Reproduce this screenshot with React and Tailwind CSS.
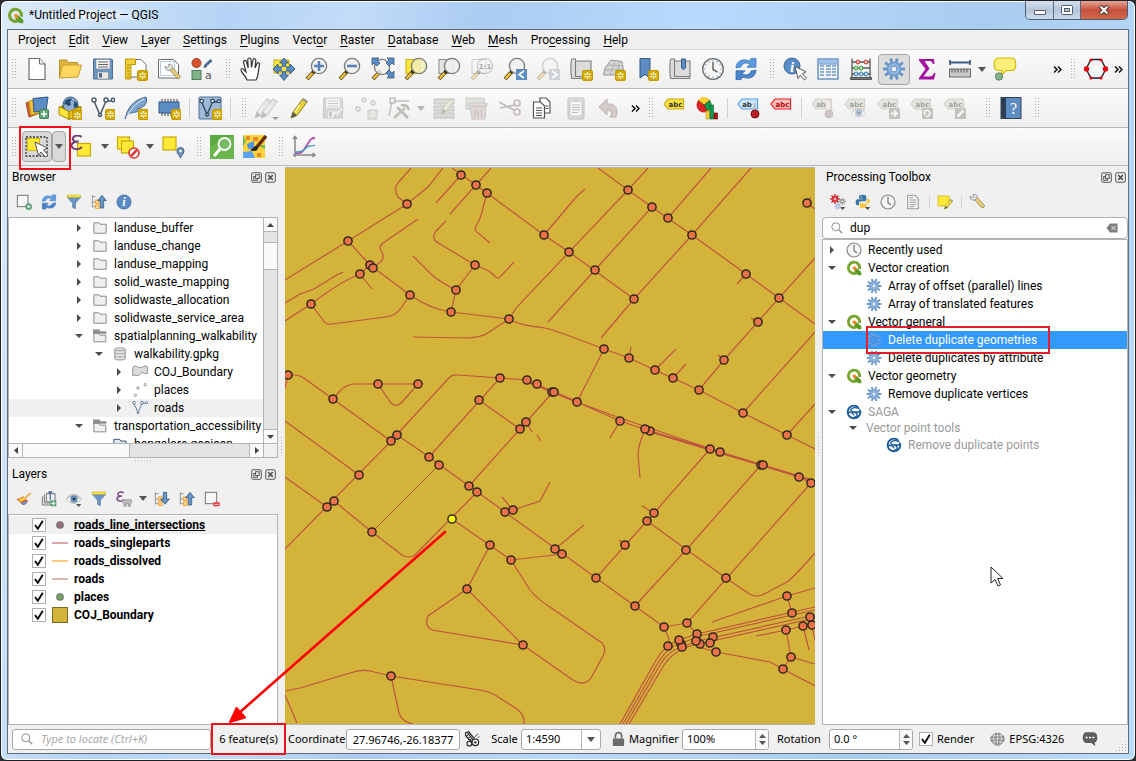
import React from "react";

/* ---------- icon drawings, all on a 24 x 24 grid ---------- */

const Badge = ({ x = 13, y = 13, dim }) => (
  <g transform={`translate(${x} ${y})`}>
    <rect x="0.5" y="0.5" width="10" height="10" rx="1.5" fill={dim ? "#bdbdb5" : "#d4aa00"} stroke={dim ? "#c9c9c2" : "#c29a00"} />
    <path d="M5.5 2v7M2.5 3.7l6 3.6M8.5 3.7l-6 3.6" stroke="#fff" strokeWidth="1.3" />
    <circle cx="5.5" cy="5.5" r="1.2" fill={dim ? "#bdbdb5" : "#d4aa00"} />
  </g>
);

const Lens = ({ cx = 14, cy = 9, fill = "#f1f1ef", dim, children }) => (
  <g opacity={dim ? 0.35 : 1}>
    <path d="M9.5 14L2 22" stroke="#5a4a1a" strokeWidth="4" strokeLinecap="butt" />
    <path d="M7.5 16.2L2.5 21.5" stroke="#f5c33b" strokeWidth="2.4" />
    <path d="M9.7 13.6L8 15.4" stroke="#222" strokeWidth="3.4" />
    <circle cx={cx} cy={cy} r="7.6" fill={fill} fillOpacity="0.85" stroke="#7d7d7b" strokeWidth="1.4" />
    {children}
  </g>
);

const Tag = ({ fill, stroke, color = "#333", text = "abc" }) => (
  <g>
    <path d="M2 8l4-5h15.500v10H6z" fill={fill} stroke={stroke} strokeWidth="1.2" />
    <text x={text === "ab" ? 11 : 13.5} y="10.500" fontSize="7" fontWeight="700" textAnchor="middle" fill={color} fontFamily="DejaVu Sans, sans-serif">{text}</text>
  </g>
);

const gearTeeth = (n, cx, cy, r1, r2, color, w) =>
  Array.from({ length: n }, (_, i) => {
    const a = (i * 2 * Math.PI) / n;
    return (
      <line key={i} x1={cx + r1 * Math.cos(a)} y1={cy + r1 * Math.sin(a)} x2={cx + r2 * Math.cos(a)} y2={cy + r2 * Math.sin(a)} stroke={color} strokeWidth={w} />
    );
  });

const Gear = ({ cx = 12, cy = 12, r = 11, color = "#6996c9", fill = "#8fb4e0", hole = "#ecf2fa", n = 10 }) => (
  <g>
    {gearTeeth(n, cx, cy, r * 0.5, r, color, r * 0.26)}
    <circle cx={cx} cy={cy} r={r * 0.6} fill={fill} stroke={color} strokeWidth={r * 0.12} />
    <circle cx={cx} cy={cy} r={r * 0.26} fill={hole} stroke={color} strokeWidth={r * 0.09} />
  </g>
);

const refresh = (
  <g>
    <path d="M2 11C2 4 9 1 15 4l2-2.600h5v8.800h-9l3-3C11.500 4.800 8 6.500 7 10z" fill="#5e9be0" stroke="#3f77b8" strokeWidth="0.8" />
    <path d="M22 13c0 7-7 10-13 7l-2 2.600h-5v-8.800h9l-3 3c4.500 2.400 8 .7 9-2.700z" fill="#4a85cc" stroke="#3267a8" strokeWidth="0.8" />
  </g>
);

const clock = (
  <g>
    <circle cx="12" cy="12" r="10.300" fill="#f6f6f5" stroke="#6b6b6b" strokeWidth="1.300" />
    {gearTeeth(12, 12, 12, 7.6, 8.8, "#6996c9", 1.2)}
    <path d="M12 5v7.500l4.500 2.500" fill="none" stroke="#666" strokeWidth="1.500" />
  </g>
);

const greyClock = (
  <g>
    <circle cx="12" cy="12" r="10.500" fill="#f4f4f4" stroke="#888" strokeWidth="1.800" />
    <path d="M12 4v9l4.500 3.500" fill="none" stroke="#777" strokeWidth="1.800" />
  </g>
);

const page = (
  <g>
    <path d="M4 1.500h10.500l5.500 5.500v15.500H4z" fill="#fff" stroke="#6d6d6d" strokeWidth="1.200" />
    <path d="M14.500 1.500v5.500h5.500" fill="#eee" stroke="#6d6d6d" strokeWidth="1" />
  </g>
);

const arrowHead = (
  <path d="M12 9.500l3 12 2.300-3.300 4.200 4.800 2-1.800-4.200-4.600 3.700-1.800z" fill="#fff" stroke="#555" strokeWidth="1" />
);

const floppy = (
  <g>
    <path d="M2.500 2h18l1 1v19h-19z" fill="#6d96c4" stroke="#4e6f94" />
    <rect x="5" y="2.500" width="14" height="9.500" fill="#f6f6f4" stroke="#75849a" strokeWidth="0.600" />
    <path d="M7 5h10M7 7.500h10M7 10h10" stroke="#666" />
    <rect x="6.500" y="15" width="11" height="7" fill="#ece8dc" stroke="#75849a" strokeWidth="0.600" />
    <rect x="8" y="16" width="3" height="4.500" fill="#4e6f94" />
  </g>
);

const pencil = (
  <g>
    <path d="M3 22l2-6L15 2.500l4.500 3L9 19.500z" fill="#e8d13c" stroke="#8f8022" />
    <path d="M3 22l2-6 4 3.500z" fill="#59584c" />
    <path d="M14 4l4.500 3 1-1.500L15 2.500z" fill="#999" />
    <path d="M11.500 9L7 16" stroke="#fff6a0" strokeWidth="1.500" />
  </g>
);

const wrench = (
  <g>
    <path d="M8 8.500l4-3.500 11 12c1 1.500-1.500 5-4 3.500z" fill="#e6cf7b" stroke="#7b6a3e" />
    <path d="M1.500 3.500l4 1.500 2-2L6 .8c4-1.500 7 1 6 5.200L8.500 9C4 10 1 7.500 1.500 3.500z" fill="#e3e3e0" stroke="#777" />
  </g>
);

const funnel = (
  <g>
    <path d="M2 5h20l-8 9v8l-4-2v-6z" fill="#6996c9" stroke="#49709c" />
    <rect x="2" y="1.500" width="20" height="3.500" fill="#fbe63c" stroke="#b9a726" strokeWidth="0.800" />
  </g>
);

const qgis = (
  <g>
    <path d="M17.500 18.200A8.500 8.500 0 1 1 20.300 13.500" fill="none" stroke="#78a52d" strokeWidth="4.400" />
    <path d="M12 12l4.500.2L23 18.500v4.300h-4.500L12 16.500z" fill="#5c9a26" />
    <path d="M9.500 9.500h4l2.500 2.500-1 3-3 1-2.500-2.500z" fill="#f9c89a" />
    <path d="M11 10.500h3l2 2-1.500 2.500h-2L11 13.500z" fill="#ee7913" />
  </g>
);

const saga = (
  <g>
    <circle cx="12" cy="12" r="9.500" fill="#fff" stroke="#1a5c9c" strokeWidth="2.800" />
    <path d="M18.500 6.500C13 4 7 6 7 9.500c0 2.500 10 2.500 10 6.500 0 2.500-4 3.500-6 4.500M2 13c4-1.500 9 0 10 4M9 12h13" fill="none" stroke="#1a5c9c" strokeWidth="2" />
    <path d="M18 1l6 1v7l-3.500-.5z" fill="#fff" />
  </g>
);

const treeArrow = (down) => (
  <g>
    <path d="M2 2v18M2 4h5M2 12h4M2 19h4" fill="none" stroke="#888" strokeWidth="1.300" />
    <rect x="7" y="9" width="5" height="5" fill="#ffe6b0" stroke="#f59a23" strokeWidth="1.500" />
    <rect x="7" y="16.500" width="5" height="5" fill="#ffe6b0" stroke="#f59a23" strokeWidth="1.500" />
    <path d={down ? "M14 2h5v10h4l-6.500 8L10 12h4z" : "M14 21h5V10h4l-6.500-8L10 10h4z"} fill="#6996c9" stroke="#34597f" strokeWidth="1.200" />
  </g>
);

const epsilon = (
  <path d="M11.500 3C8 0 2 2 3 5.500 3.500 7.500 6 8 8.500 7.500 4 7.500 1 9.500 1.500 12c.8 4 7.500 4 10.500 1" fill="none" stroke="#6b3c78" strokeWidth="2" />
);

const vectorV = (c) => (
  <g fill="none" stroke={c} strokeWidth="1.500">
    <path d="M3 5l6 14 6-14h6" />
    <circle cx="3" cy="4" r="2" fill="#fff" />
    <circle cx="15" cy="4" r="2" fill="#fff" />
    <circle cx="22" cy="4" r="1.700" fill="#fff" />
    <circle cx="9" cy="19" r="1.500" fill="#fff" />
  </g>
);

const eye = (
  <g>
    <path d="M1 13C6 5.500 16 5 22 13 16 20 7 20 1 13z" fill="#fff" stroke="#9a9a9a" strokeWidth="1.200" />
    <circle cx="12" cy="12" r="5" fill="#6b9bc9" stroke="#49709c" />
    <circle cx="12" cy="12" r="2" fill="#222" />
    <path d="M1 11C6 3.500 16 3 22 11" fill="none" stroke="#999" />
  </g>
);

const tinyCaret = <path d="M15 19.500h8l-4 4.500z" fill="#555" />;

const scroll = (
  <path d="M3 2h3.500v17.500H22V4H7M3 2C1.500 3 1.500 20 3 21.500h18.500V20" fill="#dcdcda" stroke="#7c7c7a" strokeWidth="1.100" />
);

const ICONS = {
  qgis,
  saga,
  new: page,
  open: (
    <g>
      <path d="M1.500 20V3h7l2 2.500h9V9" fill="#dfb63c" stroke="#b8922a" />
      <path d="M1.500 21L4.500 8h19L20 20z" fill="#ffd75e" stroke="#c79c2d" />
    </g>
  ),
  save: floppy,
  layout: (
    <g>
      <path d="M6 2.500h11l5 5V20H6z" fill="#fff" stroke="#6d6d6d" />
      <path d="M1.500 2h10v5.500H7V22H1.500z" fill="#f2cd3c" stroke="#c29a00" />
      <path d="M3 11h3M3 14h3M3 17h3M3 20h3M3 8h3" stroke="#a38300" />
      <Badge />
    </g>
  ),
  layoutMgr: (
    <g>
      <path d="M1.500 2.500h15l5 5V21h-20z" fill="#fff" stroke="#6d6d6d" />
      <rect x="3.500" y="4.500" width="14" height="14" fill="none" stroke="#b9cce4" />
      <g transform="translate(7 7) scale(.7)">{wrench}</g>
    </g>
  ),
  style: (
    <g>
      <circle cx="6.500" cy="6" r="4.500" fill="#d4532c" stroke="#a33c1c" />
      <rect x="2" y="13.500" width="9" height="9" fill="#81b38a" stroke="#4f7d5a" />
      <path d="M21.500 3L15 9" stroke="#49709c" strokeWidth="3" />
      <path d="M15 8l-1.500 3 3-1z" fill="#333" />
      <text x="15" y="22" fontSize="11" fill="#555" fontFamily="DejaVu Sans, sans-serif">a</text>
    </g>
  ),
  hand: (
    <path d="M8 23c-1-4-5-6-6-10 0-2 2-2 3 0l2 2L4.500 5c0-2 2.500-2.500 3 0l1.700 6L8.800 2.500c0-2 3-2 3.200 0l.5 8 1.500-7.500c.4-2 3-1.500 2.800.5L16 11l2-4.500c.8-1.500 3-.8 2.500 1C19 13 20 18 17 23z" fill="#fff" stroke="#333" strokeWidth="1.200" />
  ),
  pan: (
    <g>
      <rect x="2" y="3" width="15" height="13" fill="#fbe63c" stroke="#c9a90d" />
      <path d="M12 1l4.500 5h-3v4h4.500V7l5 5-5 5v-3h-4.500v4h3L12 23.500 7.500 18h3v-4H6v3l-5-5 5-5v3h4.500V6h-3z" fill="#5b8cc4" stroke="#34597f" strokeWidth="0.900" />
      <rect x="10" y="10" width="4" height="4" fill="#fbe63c" />
    </g>
  ),
  zoomIn: <Lens><path d="M14 4v10M9 9h10" stroke="#5784b8" strokeWidth="2.600" /></Lens>,
  zoomOut: <Lens><path d="M9 9h10" stroke="#5784b8" strokeWidth="2.600" /></Lens>,
  zoomFull: (
    <g>
      <Lens cx={11} cy={10} />
      <path d="M1 1h7L6 3l3 3-3 3-3-3-2 2zM23 1v7l-2-2-3 3-3-3 3-3-2-2zM23 21h-7l2-2-3-3 3-3 3 3 2-2z" fill="#5b8cc4" stroke="#34597f" strokeWidth="0.800" />
    </g>
  ),
  zoomSel: <g><rect x="2" y="2.500" width="14" height="14" fill="#fbe63c" stroke="#c9a90d" /><Lens fill="#f3eeb8" cx={15} /></g>,
  zoomLayer: <g><rect x="2" y="2.500" width="14" height="14" fill="#e4e4e2" stroke="#8a8a8a" /><Lens cx={15} /></g>,
  zoomNative: (
    <g>
      <rect x="2" y="2.500" width="14" height="14" fill="none" stroke="#ccc" />
      <Lens dim cx={15} />
      <text x="15" y="12" fontSize="7" fontWeight="700" textAnchor="middle" fill="#aaa" fontFamily="DejaVu Sans, sans-serif">1:1</text>
    </g>
  ),
  zoomLast: <g><Lens /><rect x="13" y="12" width="11" height="11" fill="#5b8cc4" /><path d="M21 14l-5 3.500 5 3.500" fill="none" stroke="#fff" strokeWidth="1.800" /></g>,
  zoomNext: <g><Lens dim /><rect x="13" y="12" width="11" height="11" fill="#cfd3d8" /><path d="M16 14l5 3.500-5 3.500" fill="none" stroke="#fff" strokeWidth="1.800" /></g>,
  mapView: <g>{scroll}<Badge /></g>,
  mapView3d: <g><path d="M9 3l11 1.500 2 12-10 1.500H1.500L3 11z" fill="#d4d4d1" stroke="#999" /><path d="M6 8l15 1M3 13l18-.5M13 4L8 18M17 4l-1 13" fill="none" stroke="#aaa" strokeWidth="0.800" /><Badge /></g>,
  bookmark: <g><path d="M5 1.500h10V21l-5-3.500L5 21z" fill="#5b8cc4" stroke="#34597f" /><Badge /></g>,
  bookmarks: <g>{scroll}<path d="M13.500 2h4v9l-2 1.500-2-1.500z" fill="#5b8cc4" stroke="#34597f" /></g>,
  clock,
  greyClock,
  refresh,
  identify: (
    <g>
      <circle cx="9" cy="9" r="8" fill="#5b8cc4" stroke="#3d6aa0" />
      <text x="9" y="14.500" fontSize="15" fontStyle="italic" fontWeight="700" textAnchor="middle" fill="#fff" fontFamily="Liberation Serif, serif">i</text>
      {arrowHead}
    </g>
  ),
  table: (
    <g>
      <rect x="2" y="2" width="20" height="20" fill="#f4f8fc" stroke="#5b8cc4" strokeWidth="1.400" />
      <rect x="3" y="3" width="18" height="3.500" fill="#9cc0e6" />
      <path d="M4 9h4M4 12h4M4 15h4M4 18h4M10 9h5M10 12h5M10 15h5M10 18h5M16 9h4M16 12h4M16 15h4M16 18h4" stroke="#6996c9" strokeWidth="1.300" />
      <path d="M3 7h18" stroke="#5b8cc4" />
    </g>
  ),
  abacus: (
    <g>
      <path d="M3 1.500V20M21 1.500V20M3 5h18M3 11h18M3 17h18" stroke="#555" strokeWidth="1.300" />
      <path d="M1.500 20.500h21v2h-21z" fill="#777" stroke="#555" />
      <g fill="#f6b6b0" stroke="#c03a30"><circle cx="9" cy="5" r="2" /><circle cx="17" cy="5" r="2" /></g>
      <g fill="#bfe6b6" stroke="#3f9a3a"><circle cx="7" cy="11" r="2" /><circle cx="12" cy="11" r="2" /></g>
      <g fill="#bcdcf2" stroke="#3c7cae"><circle cx="7" cy="17" r="2" /><circle cx="12" cy="17" r="2" /><circle cx="17" cy="17" r="2" /></g>
    </g>
  ),
  gear: <Gear />,
  gearDim: <Gear color="#6f9fd8" fill="#3f8fe6" hole="#3399ff" />,
  sigma: <path d="M4 2h15l.5 5H18c-1-2.500-2-3-5-3H9.500l5 7.500-6 8H14c3 0 4-1 5-3.500h1.500L19 22.500H4V21l6.500-9L4 3.500z" fill="#a3109f" />,
  ruler: (
    <g>
      <path d="M2 5.500h20M2 3v5M22 3v5" stroke="#3f5f87" strokeWidth="1.800" />
      <rect x="1.500" y="12" width="21" height="8" fill="#c9c9c7" stroke="#6b6b6b" />
      <path d="M4 12v3.500M7 12v3.500M10 12v3.500M13 12v3.500M16 12v3.500M19 12v3.500" stroke="#555" />
    </g>
  ),
  tip: (
    <g>
      <path d="M5 1h14c5 0 5 12 0 12.500h-6L8 19l1-5.500H5C0 13 0 1.500 5 1z" fill="#fdf07a" stroke="#d5b800" strokeWidth="1.200" />
      <circle cx="6" cy="19.500" r="3.700" fill="#81b38a" stroke="#5b8a66" />
    </g>
  ),
  hexagon: (
    <g>
      <path d="M7 2.500h10L22 12l-5 9H7L2 12z" fill="none" stroke="#222" strokeWidth="1.400" />
      <g fill="#f00010"><circle cx="2.500" cy="12" r="2.700" /><circle cx="21.500" cy="12" r="2.700" /><circle cx="7" cy="3" r="1.600" /><circle cx="17" cy="3" r="1.600" /><circle cx="7" cy="21" r="1.600" /><circle cx="17" cy="21" r="1.600" /></g>
    </g>
  ),
  layers: (
    <g>
      <path d="M1 7l10-3 4 13-11 4z" fill="#c9633b" stroke="#9d4522" />
      <path d="M4 5l11-2 3 13-12 3z" fill="#f0c23c" stroke="#c29a00" />
      <path d="M8 2.500L23 1l-2 14-12 1z" fill="#5b8cc4" stroke="#34597f" />
      <rect x="14.500" y="13.500" width="9" height="9" rx="1" fill="#5fa575" stroke="#43825a" />
      <path d="M19 15v6M16 18h6" stroke="#fff" strokeWidth="1.500" />
    </g>
  ),
  geopackage: (
    <g>
      <path d="M1 11l11-5 11 5-11 5z" fill="#a88600" />
      <circle cx="12.500" cy="8.500" r="7.500" fill="#8fb0d4" stroke="#34597f" />
      <path d="M7 5c3-2 5-3 7-2l-2 3 1 3-3 1-2-2-2 1zM15 4l4 3 .5 4-3 1-1-3 1-2z" fill="#27496d" />
      <path d="M1 10.500l10 5v8L1 18.500z" fill="#fbe63c" stroke="#a88600" />
      <path d="M11 15.500l12-5v8l-12 5z" fill="#e5c21e" stroke="#a88600" />
      <Badge x={14} y={14} />
    </g>
  ),
  shape: <g>{vectorV("#4a5a6b")}<Badge x={14} /></g>,
  feather: <g><path d="M1 23C3 14 8 4 22 1c2 5-1 9-5 11l-4 1c2 1 2 2-1 3-3 .5-6 1-8 2z" fill="#7da4cf" stroke="#46698f" /><path d="M2 22C6 14 12 7 20 3" fill="none" stroke="#e6eef7" /><Badge x={14} /></g>,
  memory: (
    <g>
      <path d="M5 3v17M8 3v17M11 3v17M14 3v17M17 3v17M20 3v17" stroke="#444" />
      <rect x="2" y="6" width="20" height="11" fill="#5b8cc4" stroke="#34597f" />
      <Badge x={14} />
    </g>
  ),
  virtual: <g><rect x="1" y="1" width="22" height="22" rx="1" fill="#9db9d8" stroke="#4f7199" /><g transform="translate(1 1.500) scale(.9)">{vectorV("#34495e")}</g><Badge x={14} /></g>,
  pencils: <g opacity="0.350" style={{ filter: "grayscale(1)" }}><g transform="translate(-3 0)">{pencil}</g><g transform="translate(3 0)">{pencil}</g><path d="M17 21h7l-3.500 3z" fill="#000" /></g>,
  pencil,
  saveEdits: <g opacity="0.300" style={{ filter: "grayscale(1)" }}>{floppy}<g transform="translate(11 9) scale(.6)">{pencil}</g></g>,
  points: <g opacity="0.500"><g fill="#ddd" stroke="#888"><circle cx="10" cy="4" r="2.300" /><circle cx="19" cy="7" r="2.300" /><circle cx="4" cy="13" r="2.300" /></g><Badge dim /></g>,
  vertex: (
    <g opacity="0.350" stroke="#555" fill="none" strokeWidth="1.400">
      <path d="M2 20L5 5h17" /><rect x="3" y="2" width="5" height="5" fill="#eee" />
      <path d="M10 11l11 11" strokeWidth="2.600" /><path d="M18 12L7 22" stroke="#776a50" strokeWidth="3" /><path d="M14 9l6 1 2 4" strokeWidth="2.600" />
    </g>
  ),
  multiedit: <g opacity="0.400" style={{ filter: "grayscale(.7)" }}><path d="M2 3h20v5H2zM2 10h20v5H2zM2 17h20v5H2z" fill="#b9b58f" stroke="#777" /><g transform="translate(7 0)scale(.8)">{pencil}</g></g>,
  trash: <g opacity="0.350"><rect x="1" y="2" width="18" height="11" fill="#bba" stroke="#777" /><path d="M4 7h18v3H4zM5 11h16l-1 12H7z" fill="#c9a3a0" stroke="#777" /><path d="M10 13v8M13 13v8M16.500 13v8" stroke="#777" strokeWidth="1.500" /></g>,
  scissors: <g opacity="0.350" fill="none" stroke="#555" strokeWidth="1.700"><path d="M1 6l15 8M2 12l15-3" /><circle cx="19" cy="7" r="3" stroke="#755" /><circle cx="19" cy="16" r="3" stroke="#755" /></g>,
  copy: <g fill="#fff" stroke="#555" strokeWidth="1.200"><path d="M9 2h6l4 4v11H9z" /><path d="M2.500 6h7l4 4v12H2.500z" /><path d="M5 12h6M5 14.500h6M5 17h6M5 19.500h6M14.500 10h3M14.500 12.500h3" /></g>,
  paste: <g opacity="0.350"><rect x="4" y="2" width="16" height="21" rx="1" fill="#bbb" stroke="#555" /><path d="M6 5h12v15H6z" fill="#fff" stroke="#777" /><rect x="8" y="1" width="8" height="5" fill="#999" /><path d="M8 9h8M8 11.500h8M8 14h8M8 16.500h6" stroke="#555" /></g>,
  undo: <path d="M10 3v5c9-1 12 7 9 13h-6c3-4 2-7-3-7v5L2 11z" fill="#d5cbc7" stroke="#bdb3af" />,
  label: <Tag fill="#f8e13c" stroke="#c8ab18" />,
  diagram: (
    <g>
      <circle cx="9" cy="9" r="7.500" fill="#d8232a" />
      <path d="M9 9L3 4.300A7.500 7.500 0 0 1 15 4.300z" fill="#fbd12f" /><path d="M9 9l6-4.700a7.500 7.500 0 0 1-2 11z" fill="#109b4c" />
      <path d="M9 9L3 4.300M9 9l6-4.700M9 9l3 7" stroke="#5a2a10" strokeWidth="0.700" />
      <rect x="11" y="15" width="3.500" height="8" fill="#fbd12f" stroke="#b8922a" strokeWidth="0.600" /><rect x="15" y="9" width="3.500" height="14" fill="#109b4c" stroke="#075c2c" strokeWidth="0.600" /><rect x="19" y="17" width="3.500" height="6" fill="#b01818" stroke="#600" strokeWidth="0.600" />
    </g>
  ),
  labelPin: <g><Tag fill="#cfe6ff" stroke="#4d9df0" text="ab" /><path d="M18.500 7v8" stroke="#bbb" strokeWidth="2" /><circle cx="19" cy="18" r="4" fill="#b72027" stroke="#7d1015" /></g>,
  labelRed: <Tag fill="#ffc0c0" stroke="#f01818" color="#b30000" />,
  labelPinD: <g opacity="0.450"><Tag fill="#d4cfc0" stroke="#a9a595" text="ab" /><path d="M18.500 7v8" stroke="#eee" strokeWidth="2" /><circle cx="19" cy="18" r="4" fill="#a98f90" stroke="#888" /></g>,
  labelEye: <g opacity="0.450"><Tag fill="#d4cfc0" stroke="#a9a595" /><g transform="translate(8 9) scale(.65)">{eye}</g></g>,
  labelMove: <g opacity="0.450"><Tag fill="#d4cfc0" stroke="#a9a595" /><rect x="13" y="12" width="11" height="11" rx="1" fill="#8b8b80" /><path d="M15 17.500h6M18 14.500l3 3-3 3" stroke="#fff" strokeWidth="1.800" fill="none" /></g>,
  labelRotate: <g opacity="0.450"><Tag fill="#d4cfc0" stroke="#a9a595" /><rect x="13" y="12" width="11" height="11" rx="1" fill="#8b8b80" /><path d="M17 20.500c5 0 5-6 1-6s-3 4-1 4" stroke="#fff" strokeWidth="1.600" fill="none" /></g>,
  labelEdit: <g opacity="0.450"><Tag fill="#d4cfc0" stroke="#a9a595" /><rect x="13" y="12" width="11" height="11" rx="1" fill="#8b8b80" /><path d="M15.500 20.500l6-6" stroke="#fff" strokeWidth="2.500" /></g>,
  help: (
    <g>
      <rect x="2" y="1.500" width="20" height="21" fill="#5b8cc4" stroke="#34424f" />
      <rect x="2" y="1.500" width="5" height="21" fill="#2c3e50" />
      <text x="14.500" y="17.500" fontSize="16" textAnchor="middle" fill="#fff" fontFamily="Liberation Serif, serif">?</text>
    </g>
  ),
  select: (
    <g>
      <rect x="1" y="2" width="21" height="19" fill="none" stroke="#333" strokeWidth="1.300" strokeDasharray="2 1.500" />
      <rect x="2.500" y="3.500" width="12" height="12" fill="#ffe936" stroke="#d6b70c" />
      <path d="M10 7l3.500 13.500 2.500-3.500 4.500 5 2.500-2-4.500-5 4-2z" fill="#fff" stroke="#555" />
    </g>
  ),
  selectExpr: <g><rect x="6.500" y="8.500" width="13" height="12.500" fill="#ffe936" stroke="#c9a90d" strokeWidth="1.200" /><g transform="translate(-1 -1)">{epsilon}</g></g>,
  deselect: (
    <g>
      <rect x="1.500" y="2" width="12" height="12" fill="#ffe936" stroke="#c9a90d" strokeWidth="1.200" />
      <rect x="5.500" y="6" width="12" height="12" fill="#ffe936" stroke="#c9a90d" strokeWidth="1.200" />
      <circle cx="18" cy="18" r="5" fill="#fff" stroke="#e03131" strokeWidth="1.600" /><path d="M14 16.700h8v2.600h-8z" fill="#e03131" transform="rotate(-45 18 18)" />
    </g>
  ),
  selectLoc: (
    <g>
      <rect x="2" y="2" width="13" height="13" fill="#ffe936" stroke="#c9a90d" strokeWidth="1.200" />
      <path d="M19.500 23c-1-3-3.500-4-3.500-7a3.500 3.500 0 0 1 7 0c0 3-2.500 4-3.500 7z" fill="#6f93b5" stroke="#476988" /><circle cx="19.500" cy="16" r="1.300" fill="#fff" />
    </g>
  ),
  osmSearch: (
    <g>
      <rect x="0" y="0" width="24" height="24" fill="#5cab42" /><path d="M0 24V12L24 0v24z" fill="#74bd58" opacity=".6" />
      <path d="M10 14l-6 7" stroke="#fff" strokeWidth="3" /><circle cx="14.500" cy="9" r="6" fill="#76bb62" stroke="#fff" strokeWidth="1.800" />
    </g>
  ),
  osmMap: (
    <g>
      <rect x="0" y="0" width="22" height="23" fill="#ffd43b" />
      <path d="M4 9l7-3v7l-6 1z" fill="#4d94e8" /><path d="M3 1h4v4H3zM10 2h5v4h-5zM14 18h4v4h-4z" fill="#e8892c" /><path d="M0 17l9-1 3 7H0z" fill="#5aa4ef" /><path d="M0 0l3 6-3 6zM14 10l8 4v-4z" fill="#79b84a" />
      <path d="M23 1L13 13" stroke="#6b2d0e" strokeWidth="3.500" /><path d="M14 11c-3 0-4 3-7 4 3 2 8 1 8-2z" fill="#222" />
    </g>
  ),
  chart: (
    <g fill="none" strokeWidth="1.500">
      <path d="M3 2v20M1 20h22M1 4l2-2.500L5 4M20.500 18l2.500 2-2.500 2" stroke="#888" />
      <path d="M3 18C12 19 11 15 15 10c3-4 3-7 8-7" stroke="#b24cb8" strokeWidth="1.800" />
      <path d="M3 17c8 0 9-2 12-5 2-2 5 0 8-2" stroke="#4aa0bf" />
    </g>
  ),
  addLayer: <g><rect x="2" y="2" width="16" height="17" fill="#f6f6f6" stroke="#777" strokeWidth="1.500" /><circle cx="19" cy="19" r="4.500" fill="#5fa575" stroke="#43825a" /><path d="M19 16.500v5M16.500 19h5" stroke="#fff" strokeWidth="1.500" /></g>,
  removeLayer: <g><rect x="2" y="2" width="17" height="17" fill="#f6f6f6" stroke="#777" strokeWidth="1.500" /><rect x="14" y="17" width="9.500" height="6" rx="1.500" fill="#ef2929" /><path d="M16 20h5.500" stroke="#fff" strokeWidth="1.600" /></g>,
  funnel,
  collapse: treeArrow(false),
  expand: treeArrow(true),
  info: (
    <g>
      <circle cx="12" cy="12" r="10.500" fill="#5b8cc4" stroke="#3d6aa0" strokeWidth="1.300" />
      <text x="12" y="18.500" fontSize="18" fontStyle="italic" fontWeight="700" textAnchor="middle" fill="#fff" fontFamily="Liberation Serif, serif">i</text>
    </g>
  ),
  brush: (
    <g>
      <path d="M1 12l9 9c5 0 6-3 8-6l-7-7C8 10 4 12 1 12z" fill="#e25822" /><path d="M4 12c3 0 6-2 8-3l3 3c-3 2-6 4-9 4z" fill="#ffd43b" /><path d="M7 18c3 0 7-2 9-4l1 1c-1 4-4 6-7 6z" fill="#6b8fd0" />
      <path d="M14 10l8-7" stroke="#e0b56b" strokeWidth="3" />
    </g>
  ),
  addGroup: (
    <g>
      <path d="M2 8v13h13M5 5v13h13" fill="none" stroke="#777" strokeWidth="1.500" /><rect x="8" y="4" width="13" height="12" fill="none" stroke="#777" strokeWidth="1.500" />
      <path d="M14 0v13M11 3l3-3 3 3" stroke="#4f7199" fill="none" strokeWidth="2" /><rect x="14" y="14" width="9" height="9" rx="1" fill="#5fa575" /><path d="M18.500 15.500v6M15.500 18.500h6" stroke="#fff" strokeWidth="1.500" />
    </g>
  ),
  eye: <g>{eye}{tinyCaret}</g>,
  exprFilter: <g>{epsilon}<path d="M10 13h13v5l-1.500 1v4h-3v-4H15v4h-3v-4l-2-2z" fill="#bbb" stroke="#888" /></g>,
  gears: (
    <g>
      <Gear cx={7.5} cy={7.5} r={7.5} color="#cf2027" fill="#dc3a3f" hole="#fff" n={8} />
      <Gear cx={18.5} cy={11} r={5.5} color="#8a8a8a" fill="#aaa" hole="#fff" n={8} />
      <Gear cx={11.5} cy={18.5} r={5} color="#8eb0d8" fill="#a9c5e6" hole="#fff" n={8} />
      {tinyCaret}
    </g>
  ),
  python: (
    <g>
      <path d="M11 1c-4 0-5 1-5 3v3h6v1H4c-2 0-3 2-3 4.500S2 17 4 17h2v-3c0-2 1-3 3-3h5c2 0 3-1 3-3V4c0-2-2-3-6-3z" fill="#3873a5" />
      <path d="M12.500 21c4 0 5-1 5-3v-3h-6v-1h8c2 0 3-1 3-3.500S21 7 19 7h-1v3c0 2-1 3-3 3h-5c-2 0-3 1-3 3v3c0 1.500 2 2 5.500 2z" fill="#f8c940" />
      <circle cx="9" cy="4" r="1" fill="#fff" />
      {tinyCaret}
    </g>
  ),
  doc: <g><path d="M4 2h11l5 5v15H4z" fill="#f4f4f4" stroke="#999" strokeWidth="1.600" /><path d="M7 9h10M7 12.500h10M7 16h10M7 19h7M7 5.500h5" stroke="#999" strokeWidth="1.400" /></g>,
  editPlace: <g><path d="M1.500 3h17v12l-4 3h-13z" fill="#ffe936" stroke="#c9a90d" /><g transform="translate(9 6) scale(.75)">{pencil}</g></g>,
  wrench,
  folder: <path d="M1.500 21V3h8.500l2 2.500h10.500V21z" fill="#f0f0f0" stroke="#8a8a8a" strokeWidth="1.700" />,
  folderOpen: <g><path d="M0 1h12v3h11v4H0z" fill="#8a8f89" /><path d="M1.500 22V7.500h8l2.500 3h10V22z" fill="#f0f0f0" stroke="#8a8a8a" strokeWidth="1.700" /></g>,
  folderBlue: <path d="M1.500 23V4h10l2 3h9v16z" fill="#dfe9f5" stroke="#44546a" strokeWidth="1.700" />,
  db: <g fill="#e8e8e6" stroke="#8a8a8a" strokeWidth="1.500"><path d="M3 4v16c0 3 18 3 18 0V4" /><ellipse cx="12" cy="4" rx="9" ry="2.500" /><path d="M3 9.500c0 3 18 3 18 0M3 15c0 3 18 3 18 0" fill="none" /></g>,
  polygon: <path d="M2 4c4-3 8 3 13 1 3-2 6-3 8-1v10c-4 2-6-2-9-1-3 4-5 5-8 4-2-1-4 1-5 0 1-5-1-9 1-13z" fill="#dcdcda" stroke="#8a8a8a" strokeWidth="1.400" />,
  pts: <g fill="#f6f6f6" stroke="#8a8a8a" strokeWidth="1.300"><circle cx="9" cy="9" r="1.800" /><circle cx="20" cy="4" r="1.800" /><circle cx="5" cy="20" r="1.800" /></g>,
  line: vectorV("#5b7d9e"),
  search: <g fill="none" stroke="#8f8f8f" strokeWidth="2"><circle cx="9.500" cy="9.500" r="8" /><path d="M15.500 15.500L22.500 22.500" strokeWidth="2.500" /></g>,
  clear: <g><path d="M8 3h15v18H8L1 12z" fill="#7d7d7d" /><path d="M11 8l8 8M19 8l-8 8" stroke="#fff" strokeWidth="1.800" /></g>,
  float: <g fill="none" stroke="#555" strokeWidth="2.200"><rect x="1.500" y="1.500" width="21" height="21" rx="4" /><rect x="10" y="6" width="8" height="8" /><path d="M10 10H6v8h8v-4" /></g>,
  close: <g fill="none" stroke="#555" strokeWidth="2.200"><rect x="1.500" y="1.500" width="21" height="21" rx="4" /><path d="M7 7l10 10M17 7L7 17" strokeWidth="3.600" /></g>,
  extents: (
    <g>
      <path d="M2 3l5-2 9 11-5 4-8-8z" fill="#ddd" stroke="#222" strokeWidth="1.600" />
      <path d="M5 2l8 11M2 6l7 9M9 4l-6 4M12 7l-6 4M14 10l-6 4" stroke="#222" strokeWidth="1.400" />
      <circle cx="17" cy="17" r="5" fill="#eee" stroke="#222" strokeWidth="1.800" /><circle cx="17" cy="17" r="1.800" fill="#333" />
      <circle cx="8" cy="19" r="3.500" fill="#eee" stroke="#222" strokeWidth="1.600" /><path d="M16 9l5-5M20 11l3-3" stroke="#333" strokeWidth="1.400" />
    </g>
  ),
  lock: <g><path d="M7 11V7c0-7 10-7 10 0v4" fill="none" stroke="#6b6b6b" strokeWidth="2.600" /><rect x="3" y="11" width="18" height="12" rx="1.500" fill="#6b6b6b" /></g>,
  globe: (
    <g>
      <path d="M0 11L4 5l5-3h6l5 3 4 6-4 6-5 4H9l-5-4z" fill="#8a8a8a" stroke="#666" />
      <path d="M0 11h24M3.500 6h17M3.500 16h17M12 2v19M8 2.500c-3 5-3 12 1 18M16 2.500c3 5 3 12-1 18" fill="none" stroke="#ececec" strokeWidth="1.100" />
    </g>
  ),
  chat: <g><path d="M6 2h12c6.500 1 6.500 14 1 15l1 6-6-5H6C-.5 17-.5 3 6 2z" fill="#5d5d5d" /><path d="M5.500 9.700h3M10.500 9.700h3M15.500 9.700h3" stroke="#fff" strokeWidth="2.400" /></g>,
};

const Icon = ({ name, className = "size-6" }) => (
  <svg viewBox="0 0 24 24" className={`${className} shrink-0`} aria-hidden="true">{ICONS[name]}</svg>
);

/* ---------- toolbar parts ---------- */

const Handle = ({ className = "" }) => (
  <div className={`flex w-3 shrink-0 justify-center ${className}`}>
    <svg className="h-[20px] w-[5px]" viewBox="0 0 5 20" aria-hidden="true">
      {Array.from({ length: 7 }, (_, i) => (
        <path key={i} d={`M0 ${i * 3 + 0.5}h1M3 ${i * 3 + 0.5}h1`} stroke="#aaa" />
      ))}
    </svg>
  </div>
);

const Sep = () => (
  <div className="flex w-2 shrink-0 justify-center"><div className="h-5 w-px bg-[#cfcfcf]" /></div>
);

const Tool = ({ name, active }) => (
  <button type="button" aria-label={name} className="flex h-8 w-[33px] shrink-0 items-center justify-center">
    <span className={active ? "flex h-[31px] w-8 items-center justify-center rounded-sm border border-[#a5a5a5] bg-[#dcdcdc]" : "flex"}>
      <Icon name={name} />
    </span>
  </button>
);

const Tools = ({ names }) => names.split(" ").map((n) => <Tool key={n} name={n} active={n === "gear"} />);

const Caret = ({ dim }) => (
  <button type="button" aria-label="more" className="flex w-3 shrink-0 justify-center">
    <svg className="h-[5px] w-2" viewBox="0 0 8 5" aria-hidden="true"><path d="M0 0h8L4 5z" fill={dim ? "#b5b5b5" : "#555"} /></svg>
  </button>
);

const More = ({ className = "w-5" }) => (
  <button type="button" aria-label="more tools" className={`flex shrink-0 justify-center ${className}`}>
    <svg className="h-[7px] w-[9px]" viewBox="0 0 9 7" aria-hidden="true"><path d="M1 .5l3 3-3 3M5 .5l3 3-3 3" fill="none" stroke="#111" strokeWidth="1.500" /></svg>
  </button>
);

const bar = "flex shrink-0 items-center border-b border-[#b9b9b9] bg-linear-to-b from-[#fbfbfb] to-[#eeeeee]";

const MENU = [["Pro", "j", "ect"], ["", "E", "dit"], ["", "V", "iew"], ["", "L", "ayer"], ["", "S", "ettings"], ["", "P", "lugins"], ["Vect", "o", "r"], ["", "R", "aster"], ["", "D", "atabase"], ["", "W", "eb"], ["", "M", "esh"], ["Pro", "c", "essing"], ["", "H", "elp"]];

/* ---------- docks ---------- */

const DockTitle = ({ children }) => (
  <div className="flex h-[22px] shrink-0 items-center gap-[3px] pl-1 pr-[2px]">
    <h2 className="mr-auto">{children}</h2>
    <button type="button" aria-label="Float panel"><Icon name="float" className="size-[11px]" /></button>
    <button type="button" aria-label="Close panel"><Icon name="close" className="size-[11px]" /></button>
  </div>
);

const DockTools = ({ names }) => (
  <div className="flex h-[29px] shrink-0 items-center gap-px pb-[2px] pl-1">
    {names.split(" ").map((n, i) => {
      if (n === "|") return <div key={i} className="flex w-[6px] justify-center"><div className="h-3 w-px bg-[#cfcfcf]" /></div>;
      if (n === "v") return <Caret key={i} />;
      return (
        <button key={i} type="button" aria-label={n} className="flex w-6 shrink-0 justify-center"><Icon name={n} className="size-4" /></button>
      );
    })}
  </div>
);

const Twist = ({ open }) => (
  <button type="button" aria-label={open ? "Collapse" : "Expand"} className="flex w-2 shrink-0 justify-center">
    <svg className="size-2" viewBox="0 0 8 8" aria-hidden="true"><path d={open ? "M0 2h8L4 6z" : "M2 0v8l4-4z"} fill="#4d4d4d" /></svg>
  </button>
);

const BROWSER = [
  [0, "folder", "landuse_buffer", false],
  [0, "folder", "landuse_change", false],
  [0, "folder", "landuse_mapping", false],
  [0, "folder", "solid_waste_mapping", false],
  [0, "folder", "solidwaste_allocation", false],
  [0, "folder", "solidwaste_service_area", false],
  [0, "folderOpen", "spatialplanning_walkability", true],
  [1, "db", "walkability.gpkg", true],
  [2, "polygon", "COJ_Boundary", false],
  [2, "pts", "places", false],
  [2, "line", "roads", false],
  [0, "folderOpen", "transportation_accessibility", true],
  [1, "folderBlue", "bangalore.geojson", null],
];
const INDENT = ["pl-[66px]", "pl-[86px]", "pl-[106px]"];

const Browser = () => (
  <section className="flex shrink-0 flex-col">
    <DockTitle>Browser</DockTitle>
    <DockTools names="addLayer refresh funnel collapse info" />
    <div className="grid h-[241px] grid-cols-[1fr_14px] grid-rows-[1fr_14px] border border-[#b4b4b4] bg-white">
      <ul className="min-h-0 overflow-hidden pt-px">
        {BROWSER.map(([lvl, icon, label, open]) => (
          <li key={label} className={`flex h-[18px] items-center whitespace-nowrap ${INDENT[lvl]} ${label === "roads" ? "bg-[#f0f0f0]" : ""}`}>
            {open === null ? <span className="w-2" /> : <Twist open={open} />}
            <span className="flex w-[31px] shrink-0 items-center justify-center pl-[2px]"><Icon name={icon} className={lvl === 2 ? "size-4" : "size-[14px]"} /></span>
            <span>{label}</span>
          </li>
        ))}
      </ul>
      <div className="flex flex-col border-l border-[#b4b4b4] bg-[#e4e4e4]">
        <button type="button" aria-label="Scroll up" className="flex h-[14px] items-center justify-center border-b border-[#b4b4b4] bg-[#fafafa]"><svg className="h-1 w-[7px]" viewBox="0 0 7 4"><path d="M0 4h7L3.500 0z" fill="#444" /></svg></button>
        <div className="mt-[10px] h-7 border-y border-[#b4b4b4] bg-[#fafafa]" />
        <button type="button" aria-label="Scroll down" className="mt-auto flex h-[14px] items-center justify-center border-t border-[#b4b4b4] bg-[#fafafa]"><svg className="h-1 w-[7px]" viewBox="0 0 7 4"><path d="M0 0h7L3.500 4z" fill="#444" /></svg></button>
      </div>
      <div className="flex border-t border-[#b4b4b4] bg-[#e4e4e4]">
        <button type="button" aria-label="Scroll left" className="flex w-[14px] items-center justify-center border-r border-[#b4b4b4] bg-[#fafafa]"><svg className="h-[7px] w-1" viewBox="0 0 4 7"><path d="M4 0v7L0 3.500z" fill="#444" /></svg></button>
        <div className="w-[107px] border-r border-[#b4b4b4] bg-[#fafafa]" />
        <button type="button" aria-label="Scroll right" className="ml-auto flex w-[14px] items-center justify-center border-l border-[#b4b4b4] bg-[#fafafa]"><svg className="h-[7px] w-1" viewBox="0 0 4 7"><path d="M0 0v7l4-3.500z" fill="#444" /></svg></button>
      </div>
      <div className="border-l border-t border-[#b4b4b4] bg-[#f0f0f0]" />
    </div>
  </section>
);

const Check = ({ id, label }) => (
  <span className="grid size-[14px] shrink-0 place-items-center">
    <input id={id} type="checkbox" defaultChecked aria-label={label} className="col-start-1 row-start-1 size-[14px] appearance-none border border-[#b0b0b0] bg-white" />
    <svg className="pointer-events-none col-start-1 row-start-1 size-[10px]" viewBox="0 0 10 10"><path d="M1 5l2.800 3.800L8.800.8" fill="none" stroke="#111" strokeWidth="2" /></svg>
  </span>
);

const symPoint = (fill) => <circle cx="8" cy="8" r="3.200" fill={fill} stroke="#777" strokeWidth="1.300" />;
const symLine = (color) => <path d="M0 8h16" stroke={color} strokeWidth="2" />;
const LAYERS = [
  ["roads_line_intersections", symPoint("#9c6b74")],
  ["roads_singleparts", symLine("#dda5a8")],
  ["roads_dissolved", symLine("#fdc97d")],
  ["roads", symLine("#d6b9ae")],
  ["places", symPoint("#72a859")],
  ["COJ_Boundary", <rect x="0.500" y="0.500" width="15" height="15" fill="#d3b33a" stroke="#7a6a2a" />],
];

const Layers = () => (
  <section className="flex min-h-0 flex-1 flex-col">
    <DockTitle>Layers</DockTitle>
    <DockTools names="brush addGroup eye funnel exprFilter v expand collapse removeLayer" />
    <ul className="min-h-0 flex-1 border border-[#b4b4b4] bg-white pt-px font-bold">
      {LAYERS.map(([name, sym], i) => (
        <li key={name} className={`flex h-[18px] items-center pl-[23px] ${i === 0 ? "bg-[#f0f0f0]" : ""}`}>
          <Check id={`layer-${i}`} label={name} />
          <svg className="mx-[6px] size-4 shrink-0" viewBox="0 0 16 16" aria-hidden="true">{sym}</svg>
          <label htmlFor={`layer-${i}`} className={i === 0 ? "underline" : ""}>{name}</label>
        </li>
      ))}
    </ul>
  </section>
);

/* ---------- map ---------- */

const ROADS = [
  "M411 168L398 183Q393 188 398 197L407 204L428 187L443 168M407 204L348 241L285 280M348 241L370 265",
  "M461 175L436 203M452 168L476 185L487 193L544 235L569 252L634 299M491 168L450 214",
  "M487 193L483 208Q481 218 476 226Q474 231 477 232L490 243M446 221L436 231Q430 239 440 244L475 265L489 271L495 276Q498 280 501 276L514 262",
  "M475 265L456 290L451 312M413 256L432 275Q440 282 456 290M418 219L383 243Q378 247 382 252Q385 259 380 262L373 268",
  "M370 265L410 295Q430 309 451 312L509 319Q518 325 545 328Q552 329 604 349M285 321L311 304Q340 282 360 274L370 265M360 274L372 289",
  "M285 303L300 294L314 289L335 276L343 272M311 304L323 320Q326 325 332 324L385 317Q396 316 401 308L410 295",
  "M413 337L468 338Q480 337 486 334L509 319L516 308L628 190L648 168M585 189L577 196L544 235M548 322L595 270L652 207",
  "M634 299L601 338M634 299L692 235L751 168M598 168L628 190L652 207L692 235L746 274L779 298L815 324M668 218L711 168",
  "M746 274L737 284M815 258L779 298L724 360L699 390M758 322L751 318M724 360L718 355M811 197L807 203L815 209",
  "M604 349L629 358L655 370L699 390L743 413L787 435L815 449M629 358L631 347M655 370L676 349M673 378L686 364M743 413L815 332M787 435L815 404",
  "M604 349L577 402M620 421L610 438M645 429Q638 446 638 455L640 478",
  "M500 378L527 380L552 392L577 402L620 421L650 431L710 449L799 477L811 483M527 382L577 402L620 418L720 452L799 476",
  "M285 388L288 375L296 375Q302 376 308 381L391 441M333 399L340 391Q345 385 354 384L418 384L402 402Q397 408 391 403L378 384",
  "M391 441L448 379Q452 374 458 375L500 378L429 457M479 400L520 429M553 392L520 429L469 486M526 422L532 432M537 435L541 441",
  "M285 421L359 475M285 477L327 507M285 549L397 435L412 445L429 457L664 627M334 501L372 532L402 555Q408 559 415 555L477 492",
  "M452 519L511 560L554 555L562 554M490 545L467 589L428 616Q424 626 432 630L523 645L467 589",
  "M511 560L530 590Q537 599 550 607L602 643Q607 648 603 656L591 678Q583 688 570 678L523 645M513 510L540 501L550 482M502 497L513 510",
  "M285 691L300 688L350 673Q360 669 370 671L391 676L480 690Q488 691 495 695L517 709Q525 715 524 724M391 676L399 713Q402 722 413 724M285 695L297 723",
  "M555 549L584 525M596 578L654 513L710 449M654 513L642 506M625 545L619 540M647 521L726 578L748 593Q756 599 766 593L787 582Q792 579 815 553",
  "M635 606L686 550L761 465M811 483L687 623L702 640M664 627L687 623M664 627L669 639L668 646",
  "M712 622L787 596L815 588M787 596L792 613M756 636L786 630L803 626L812 625M786 630L791 657L783 669M791 657L815 664M783 669L815 686M783 669L770 662L716 652L702 648L697 634M803 626L809 650M810 617L815 640",
  "M620 724L655 662Q664 645 679 640L697 634L815 607M623 724L658 663Q668 646 682 643L700 636L815 610M626 724L660 665Q668 650 684 646L702 640L815 615M629 724L664 665Q672 652 690 646L815 618",
];

const NODES = [
  [461, 175], [476, 185], [487, 193], [407, 204], [348, 241], [370, 265], [373, 268], [360, 274], [311, 304], [410, 295], [475, 265], [456, 290], [451, 312], [509, 319], [544, 235],
  [288, 375], [333, 399], [378, 384], [418, 384], [500, 378], [527, 380], [537, 384], [552, 392], [554, 392], [479, 400], [526, 422], [520, 429], [397, 435], [391, 441],
  [628, 190], [652, 207], [668, 218], [692, 235], [569, 252], [595, 270], [634, 299], [746, 274], [779, 298], [758, 322], [724, 360], [807, 203], [604, 349], [629, 358], [655, 370], [673, 378], [699, 390], [743, 413], [787, 435], [577, 402], [620, 421], [650, 431], [645, 429],
  [359, 475], [334, 501], [327, 507], [372, 532], [429, 457], [439, 465], [469, 486], [477, 492], [505, 512], [513, 510], [490, 545], [511, 560], [467, 589], [523, 645], [391, 676],
  [710, 449], [720, 452], [761, 465], [763, 465], [799, 477], [811, 483], [654, 513], [647, 521], [625, 545], [686, 550], [555, 549], [562, 554], [596, 578], [635, 606], [726, 578],
  [664, 627], [687, 623], [668, 646], [681, 644], [682, 647], [679, 640], [697, 634], [700, 644], [696, 641], [713, 637], [710, 643], [716, 652],
  [787, 596], [792, 613], [810, 617], [803, 626], [812, 625], [786, 630], [791, 657], [783, 669],
];

const MapCanvas = () => (
  <main className="flex min-w-0 flex-1 flex-col border-b border-[#b4b4b4] pt-px">
    <div className="min-h-0 flex-1 border-t border-[#b4b4b4] bg-[#d3b33a]">
      <svg className="size-full" viewBox="285 168 530 556" preserveAspectRatio="xMinYMin slice" role="img" aria-label="Road network map">
        <g fill="none" stroke="#bf5540" strokeWidth="1.200">
          {ROADS.map((d) => <path key={d} d={d} />)}
          <path d="M372 532L439 465" stroke="#a8602c" strokeWidth="1" />
          <path d="M527 381L577 402M645 430L811 480" strokeWidth="2" />
        </g>
        <g fill="#ea7248" stroke="#33291f" strokeWidth="1.500">
          {NODES.map(([x, y], i) => <circle key={i} cx={x} cy={y} r="4.100" />)}
          <circle cx="452" cy="519" r="4.100" fill="#ffff00" />
        </g>
      </svg>
    </div>
  </main>
);

/* ---------- processing toolbox ---------- */

const TOOLBOX = [
  ["pl-[5px]", false, "greyClock", "Recently used"],
  ["pl-[5px]", true, "qgis", "Vector creation"],
  ["pl-[33px]", null, "gear", "Array of offset (parallel) lines"],
  ["pl-[33px]", null, "gear", "Array of translated features"],
  ["pl-[5px]", true, "qgis", "Vector general"],
  ["pl-[33px]", null, "gearDim", "Delete duplicate geometries"],
  ["pl-[33px]", null, "gear", "Delete duplicates by attribute"],
  ["pl-[5px]", true, "qgis", "Vector geometry"],
  ["pl-[33px]", null, "gear", "Remove duplicate vertices"],
  ["pl-[5px]", true, "saga", "SAGA"],
  ["pl-[26px]", true, null, "Vector point tools"],
  ["pl-[53px]", null, "saga", "Remove duplicate points"],
];

const Toolbox = () => (
  <aside className="flex w-[306px] shrink-0 flex-col">
    <DockTitle>Processing Toolbox</DockTitle>
    <DockTools names="gears python greyClock doc | editPlace | wrench" />
    <label className="flex h-[22px] shrink-0 items-center gap-[7px] rounded-sm border border-[#b0b0b0] bg-white px-2">
      <Icon name="search" className="size-3" />
      <input type="text" defaultValue="dup" aria-label="Search algorithms" className="min-w-0 flex-1 outline-none" />
      <button type="button" aria-label="Clear search"><Icon name="clear" className="h-3 w-[14px]" /></button>
    </label>
    <ul className="min-h-0 flex-1 border border-[#b4b4b4] bg-white pt-px">
      {TOOLBOX.map(([pad, open, icon, label], i) => (
        <li key={label} className={`relative flex items-center ${pad} ${i === 10 ? "h-4" : i === 9 ? "h-[17px]" : "h-[18px]"} ${i === 5 ? "bg-[#3399ff] text-white" : ""} ${i > 8 ? "text-[#999999]" : ""}`}>
          {open !== null && <Twist open={open} />}
          {icon ? <span className="mr-[6px] ml-[10px] flex shrink-0"><Icon name={icon} className="size-4" /></span> : <span className="w-[9px]" />}
          <span>{label}</span>
          {i === 5 && <span className="pointer-events-none absolute -top-[5px] left-[43px] z-10 h-[28px] w-[184px] border-2 border-[#e0202c]" />}
        </li>
      ))}
    </ul>
  </aside>
);

/* ---------- status bar ---------- */

const box = "h-[21px] rounded-[3px] border border-[#a9a9a9] bg-white";

const Spin = ({ id, value, className }) => (
  <span className={`flex shrink-0 overflow-hidden ${box} ${className}`}>
    <input id={id} type="text" defaultValue={value} className="min-w-0 flex-1 pl-1 outline-none" />
    <span className="flex w-[13px] flex-col justify-center gap-[3px] border-l border-[#b4b4b4] bg-[#fafafa]">
      <button type="button" aria-label="Increase" className="flex justify-center"><svg className="h-1 w-[7px]" viewBox="0 0 7 4"><path d="M0 4h7L3.500 0z" fill="#555" /></svg></button>
      <button type="button" aria-label="Decrease" className="flex justify-center"><svg className="h-1 w-[7px]" viewBox="0 0 7 4"><path d="M0 0h7L3.500 4z" fill="#555" /></svg></button>
    </span>
  </span>
);

const StatusBar = () => (
  <footer className="flex h-7 shrink-0 items-center whitespace-nowrap pl-1 font-['Noto_Sans','Open_Sans',sans-serif] text-[11px]">
    <label className={`flex w-[199px] shrink-0 items-center gap-2 px-2 ${box}`}>
      <Icon name="search" className="size-3" />
      <input type="text" aria-label="Locate" placeholder="Type to locate (Ctrl+K)" className="min-w-0 flex-1 italic outline-none placeholder:text-[#a8a8a8]" />
    </label>
    <span className="relative flex h-7 w-[75px] shrink-0 items-center justify-center">
      6 feature(s)
      <span className="pointer-events-none absolute -inset-y-[2px] inset-x-0 border-2 border-[#e8131c]" />
    </span>
    <span className="flex w-[60px] shrink-0 pl-[2px]"><label htmlFor="coord">Coordinate</label></span>
    <input id="coord" type="text" defaultValue="27.96746,-26.18377" className={`w-[114px] shrink-0 px-1 text-center outline-none ${box}`} />
    <button type="button" aria-label="Toggle extents" className="mx-1 shrink-0"><Icon name="extents" className="size-4" /></button>
    <span className="flex w-[37px] shrink-0 justify-center pl-1"><label htmlFor="scale">Scale</label></span>
    <span className={`grid w-20 shrink-0 grid-cols-[1fr_19px] items-center ${box}`}>
      <select id="scale" defaultValue="1:4590" className="col-span-2 col-start-1 row-start-1 h-full appearance-none pl-1 outline-none"><option>1:4590</option></select>
      <span className="pointer-events-none col-start-2 row-start-1 flex h-full items-center justify-center border-l border-[#b4b4b4]"><svg className="h-[5px] w-2" viewBox="0 0 8 5"><path d="M0 0h8L4 5z" fill="#555" /></svg></span>
    </span>
    <button type="button" aria-label="Lock scale" className="mr-[3px] ml-[10px] shrink-0"><Icon name="lock" className="h-4 w-[15px]" /></button>
    <span className="flex w-[53px] shrink-0"><label htmlFor="mag">Magnifier</label></span>
    <Spin id="mag" value="100%" className="w-[87px]" />
    <span className="flex w-[60px] shrink-0 pl-2"><label htmlFor="rot">Rotation</label></span>
    <Spin id="rot" value="0.0 °" className="w-[84px]" />
    <span className="ml-[6px] flex shrink-0 items-center gap-1"><Check id="render" label="Render" /><label htmlFor="render">Render</label></span>
    <button type="button" className="ml-4 flex shrink-0 items-center gap-1"><Icon name="globe" className="size-[15px]" />EPSG:4326</button>
    <button type="button" aria-label="Messages" className="ml-[18px] shrink-0"><Icon name="chat" className="size-4" /></button>
    <svg className="mt-auto mr-px mb-px ml-auto size-3 shrink-0" viewBox="0 0 12 12" aria-hidden="true"><path d="M10 1.500h1M7 4.500h1M10 4.500h1M4 7.500h1M7 7.500h1M10 7.500h1M1 10.500h1M4 10.500h1M7 10.500h1M10 10.500h1" stroke="#b4b4b4" /></svg>
  </footer>
);

/* ---------- window ---------- */

const TitleBar = () => (
  <header className="flex h-7 shrink-0 items-start pr-px">
    <div className="flex h-full items-center gap-[5px]">
      <Icon name="qgis" className="size-[17px]" />
      <h1 className="bg-[radial-gradient(closest-side,rgba(255,255,255,0.7),transparent)]">*Untitled Project — QGIS</h1>
    </div>
    <div className="ml-auto flex h-[19px] overflow-hidden rounded-b-[5px] border border-t-0 border-[#4d5b6e]">
      <button type="button" aria-label="Minimize" className="flex w-7 items-end justify-center border-r border-[#5d6b7e] bg-linear-to-b from-[#d5e0ed] via-[#b5c5d8] to-[#cbdcee] pb-1"><span className="h-[5px] w-3 rounded-[1px] border border-[#555d68] bg-white" /></button>
      <button type="button" aria-label="Maximize" className="flex w-[27px] items-center justify-center border-r border-[#5d6b7e] bg-linear-to-b from-[#d5e0ed] via-[#b5c5d8] to-[#cbdcee]"><svg className="h-[10px] w-3" viewBox="0 0 12 10"><rect x=".5" y=".5" width="11" height="9" rx="1" fill="#fff" stroke="#555d68" /><rect x="3.500" y="3.500" width="5" height="3" fill="#b5c5d8" stroke="#555d68" /></svg></button>
      <button type="button" aria-label="Close" className="flex w-[46px] items-center justify-center bg-linear-to-b from-[#e3a599] via-[#c5503c] to-[#d0684c]"><svg className="h-[10px] w-3" viewBox="0 0 12 10"><path d="M2 1l8 8M10 1L2 9" stroke="#4d2a28" strokeWidth="4" /><path d="M2.500 1.500l7 7M9.500 1.500l-7 7" stroke="#fff" strokeWidth="2.200" /></svg></button>
    </div>
  </header>
);

const SideGrip = () => (
  <div className="flex w-[7px] shrink-0 items-center justify-center">
    <svg className="h-[17px] w-[3px]" viewBox="0 0 3 17" aria-hidden="true"><path d="M1.500 0v17" stroke="#b4b4b4" strokeDasharray="1 2" /></svg>
  </div>
);

export default function App() {
  return (
    <div className="relative h-screen overflow-hidden bg-[#2a2d33] font-[Roboto,'Open_Sans',sans-serif] text-[12px] leading-4 text-black">
      <div className="flex h-full flex-col rounded-[7px] border border-[#1e2026] bg-[linear-gradient(100deg,#dcebfa_0%,#b5d4f5_18%,#c2dcf8_28%,#abccf1_38%,#b8dafc_55%,#a9cdf0_78%,#bcdcfb_100%)] px-[6px] pb-[6px] inset-ring inset-ring-white">
        <TitleBar />
        <div className="flex min-h-0 flex-1 flex-col border border-[#5f6d7c] bg-[#f0f0f0]">
          <nav className="flex h-5 shrink-0 items-center gap-[13px] border-b border-[#d6d6d6] pl-[10px]">
            {MENU.map(([a, b, c]) => (
              <button type="button" key={a + b + c}>{a}<u className="underline-offset-2">{b}</u>{c}</button>
            ))}
          </nav>
          <div className={`h-[39px] ${bar}`}>
            <Handle />
            <Tools names="new open save layout layoutMgr style" />
            <Handle className="ml-1" />
            <Tools names="hand pan zoomIn zoomOut zoomFull zoomSel zoomLayer zoomNative zoomLast zoomNext mapView mapView3d bookmark bookmarks clock refresh" />
            <Handle className="ml-1" />
            <Tools names="identify table abacus gear sigma ruler" />
            <Caret />
            <Tool name="tip" />
            <div className="flex-1" />
            <More />
            <Handle />
            <Tool name="hexagon" />
            <More className="mr-1 w-3" />
          </div>
          <div className={`h-[39px] ${bar}`}>
            <Handle />
            <Tools names="layers geopackage shape feather memory" />
            <Sep />
            <Tool name="virtual" />
            <Sep />
            <Handle className="ml-1" />
            <Tools names="pencils pencil saveEdits points vertex" />
            <Caret dim />
            <Tools names="multiedit trash scissors copy paste undo" />
            <More />
            <Handle />
            <Tools names="label diagram" />
            <Sep />
            <Tools names="labelPin labelRed" />
            <Sep />
            <Tools names="labelPinD labelEye labelMove labelRotate labelEdit" />
            <Handle className="ml-3" />
            <Tool name="help" />
            <Handle className="ml-1" />
          </div>
          <div className={`h-[38px] ${bar}`}>
            <Handle />
            <div className="relative flex h-8 w-[46px] shrink-0 items-center pl-[2px]">
              <button type="button" aria-label="Select features" className="flex h-[31px] w-8 items-center justify-center rounded-sm border border-[#a5a5a5] bg-[#d9d9d9]"><Icon name="select" /></button>
              <span className="flex h-[31px] items-center rounded-sm border border-[#a5a5a5] bg-[#d9d9d9]"><Caret /></span>
              <span className="pointer-events-none absolute -top-[5px] -left-px z-10 h-11 w-[52px] border-2 border-[#f01018]" />
            </div>
            <Tool name="selectExpr" />
            <Caret />
            <Tool name="deselect" />
            <Caret />
            <Tool name="selectLoc" />
            <Handle className="ml-1" />
            <Tools names="osmSearch osmMap" />
            <Handle className="ml-1" />
            <Tool name="chart" />
          </div>
          <div className="flex min-h-0 flex-1">
            <div className="flex w-[270px] shrink-0 flex-col">
              <Browser />
              <div className="flex h-[5px] shrink-0 items-center justify-center"><svg className="h-[2px] w-[17px]" viewBox="0 0 17 2" aria-hidden="true"><path d="M0 1h17" stroke="#b4b4b4" strokeDasharray="1 2" /></svg></div>
              <Layers />
            </div>
            <SideGrip />
            <MapCanvas />
            <SideGrip />
            <Toolbox />
          </div>
          <StatusBar />
        </div>
      </div>
      <svg className="pointer-events-none absolute bottom-[37px] left-[229px] h-[195px] w-[219px]" viewBox="0 0 219 195" aria-hidden="true">
        <path d="M216 3L10 184" stroke="#ff0000" strokeWidth="2.600" strokeLinecap="round" />
        <path d="M1 193L7.500 179l8.500 9.500z" fill="#ff0000" stroke="#ff0000" strokeWidth="2" strokeLinejoin="round" />
      </svg>
      <svg className="pointer-events-none absolute top-[566px] right-[132px] h-[21px] w-[14px]" viewBox="0 0 14 21" aria-hidden="true">
        <path d="M1 1v16l4-3.500L8 20l2.500-1.200L7.700 12.500H13z" fill="#fff" stroke="#222" />
      </svg>
    </div>
  );
}
